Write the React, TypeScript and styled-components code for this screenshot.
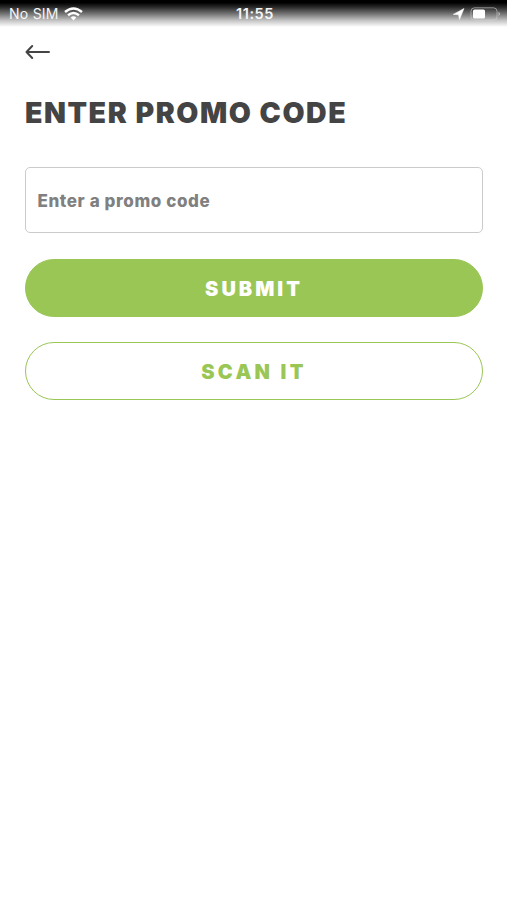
import React from 'react';
import styled, { createGlobalStyle } from 'styled-components';

const GlobalStyle = createGlobalStyle`
  *, *::before, *::after { box-sizing: border-box; }
  body { margin: 0; background: #fff; font-family: Inter, "Liberation Sans", sans-serif; }
`;

const Screen = styled.div`
  width: 100%;
  min-height: 100vh;
  background: #fff;
`;

const StatusBar = styled.header`
  display: grid;
  grid-template-columns: 1fr auto 1fr;
  align-items: center;
  height: 27px;
  padding: 0 6px 0 9px;
  background: linear-gradient(#000 0, #000 10%, #2b2b2b 27%, #777 52%, #c4c4c4 76%, #fff 100%);
  color: #f5f5f5;
  font-size: 14px;
  line-height: 27px;
`;

const StatusGroup = styled.div<{ $end?: boolean }>`
  display: flex;
  align-items: center;
  justify-content: ${({ $end }) => ($end ? 'flex-end' : 'flex-start')};
  gap: 5px;
`;

const Carrier = styled.span`
  letter-spacing: 0.25px;
`;

const Clock = styled.time`
  font-size: 14.5px;
  font-weight: 600;
  letter-spacing: 0.6px;
`;

const Content = styled.main`
  display: flex;
  flex-direction: column;
  padding: 13px 24px 0 25px;
`;

const BackButton = styled.button`
  display: flex;
  width: 26px;
  height: 24px;
  padding: 0;
  border: 0;
  background: none;
`;

const Title = styled.h1`
  margin: 31px 0 0;
  color: #444;
  font-size: 28.5px;
  font-weight: 900;
  line-height: 36px;
  letter-spacing: 1.55px;
  white-space: nowrap;
`;

const CodeInput = styled.input`
  width: 100%;
  height: 66px;
  margin-top: 36px;
  padding: 1px 11.5px 0;
  border: 1.5px solid #cbcbcb;
  border-radius: 5px;
  outline: none;
  background: #fff;
  color: #444;
  font: 800 17px Inter, "Liberation Sans", sans-serif;
  letter-spacing: 0.6px;
  &::placeholder { color: #808080; opacity: 1; }
`;

const Actions = styled.div`
  display: flex;
  flex-direction: column;
  gap: 25px;
  margin-top: 26px;
`;

const PillButton = styled.button<{ $outline?: boolean }>`
  height: 58px;
  padding: 2px 0 0;
  border: 1px solid #9ac656;
  border-radius: 29px;
  background: ${({ $outline }) => ($outline ? '#fff' : '#9ac656')};
  color: ${({ $outline }) => ($outline ? '#9ac656' : '#fff')};
  font: 900 20px Inter, "Liberation Sans", sans-serif;
  letter-spacing: ${({ $outline }) => ($outline ? '3.3px' : '3px')};
`;

const WifiIcon = () => (
  <svg width="19" height="14" viewBox="0 0 19 14" fill="none" stroke="#fff" strokeWidth="2.4">
    <path d="M1 5Q9.5-2.2 18 5M4 8.2Q9.5 3.7 15 8.2" />
    <path d="M6.7 10.5Q9.5 8.2 12.3 10.5L9.5 13.5Z" fill="#fff" stroke="none" />
  </svg>
);

const LocationIcon = () => (
  <svg width="12" height="12" viewBox="0 0 12 12">
    <path d="M11 .5 6.5 11.5 5.5 6.8.2 6.4Z" fill="#fff" stroke="#fff" strokeWidth=".5" />
  </svg>
);

const BatteryIcon = () => (
  <svg width="31" height="14" viewBox="0 0 31 14">
    <rect x="1" y=".8" width="26" height="12.4" rx="3.5" fill="none" stroke="#d0d0d0" strokeOpacity=".6" />
    <rect x="3" y="2.5" width="12" height="9" rx="1.5" fill="#fff" />
    <path d="M28.5 4.8q3 2.2 0 4.4Z" fill="#bbb" />
  </svg>
);

const ArrowIcon = () => (
  <svg width="26" height="24" viewBox="0 0 26 24" fill="none" stroke="#444" strokeWidth="2" strokeLinecap="round" strokeLinejoin="round">
    <path d="M1.5 12H24M7.2 6 1.5 12l5.7 6" />
  </svg>
);

export default function App() {
  return (
    <>
      <GlobalStyle />
      <Screen>
        <StatusBar>
          <StatusGroup>
            <Carrier>No SIM</Carrier>
            <WifiIcon />
          </StatusGroup>
          <Clock>11:55</Clock>
          <StatusGroup $end>
            <LocationIcon />
            <BatteryIcon />
          </StatusGroup>
        </StatusBar>
        <Content>
          <BackButton aria-label="Back"><ArrowIcon /></BackButton>
          <Title>ENTER PROMO CODE</Title>
          <CodeInput placeholder="Enter a promo code" />
          <Actions>
            <PillButton>SUBMIT</PillButton>
            <PillButton $outline>SCAN IT</PillButton>
          </Actions>
        </Content>
      </Screen>
    </>
  );
}
